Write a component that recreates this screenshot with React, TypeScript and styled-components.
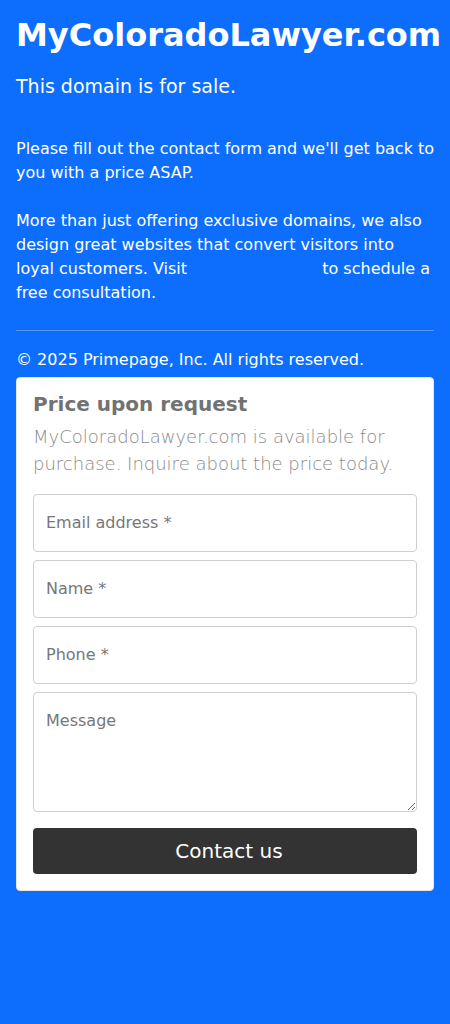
import React from "react";
import styled, { createGlobalStyle } from "styled-components";

const Global = createGlobalStyle`
  html, body {
    margin: 0;
    padding: 0;
    background: #0d6efd;
  }
  body {
    font-family: "DejaVu Sans", Verdana, sans-serif;
    color: #fff;
  }
  * { box-sizing: border-box; }
`;

const Page = styled.main`
  min-height: 1024px;
  background: #0d6efd;
  padding: 16px;
`;

const Title = styled.h1`
  margin: 0 0 18px;
  font-size: 32px;
  line-height: 1.2;
  font-weight: 700;
  color: #fff;
  white-space: nowrap;
`;

const Lead = styled.p`
  margin: 0 0 36px;
  font-size: 19px;
  line-height: 28.5px;
  font-weight: 400;
`;

const Text = styled.p`
  margin: 0 -2px 24px 0;
  font-size: 16px;
  line-height: 24px;
`;

const HiddenLink = styled.a`
  color: #0d6efd;
  text-decoration: none;
`;

const Rule = styled.hr`
  margin: 25px 0 17px;
  border: 0;
  border-top: 1px solid rgba(255, 255, 255, 0.3);
`;

const Copyright = styled.p`
  margin: 0 0 5px;
  font-size: 16px;
  line-height: 24px;
`;

const Card = styled.section`
  background: #fff;
  border: 1px solid #e6e6e6;
  border-radius: 4px;
  padding: 16px;
`;

const CardTitle = styled.h2`
  margin: 0 0 9px;
  font-size: 20px;
  line-height: 20px;
  font-weight: 700;
  color: #727272;
`;

const CardText = styled.p`
  margin: 0 0 17px;
  font-size: 18px;
  line-height: 27px;
  font-weight: 200;
  color: #8a8a8a;
`;

const Form = styled.form`
  display: flex;
  flex-direction: column;
  gap: 8px;
`;

const Field = styled.input`
  display: block;
  width: 100%;
  height: 58px;
  padding: 0 12px;
  border: 1px solid #cfcfcf;
  border-radius: 4px;
  font-family: "DejaVu Sans", Verdana, sans-serif;
  font-size: 16px;
  color: #333;
  background: #fff;
  &::placeholder { color: #777; }
`;

const Area = styled.textarea`
  display: block;
  width: 100%;
  height: 120px;
  padding: 18px 12px;
  border: 1px solid #cfcfcf;
  border-radius: 4px;
  font-family: "DejaVu Sans", Verdana, sans-serif;
  font-size: 16px;
  line-height: 19px;
  color: #333;
  background: #fff;
  resize: vertical;
  &::placeholder { color: #777; }
`;

const Submit = styled.button`
  margin-top: 8px;
  height: 46px;
  width: 100%;
  padding: 0 0 0 8px;
  border: 0;
  border-radius: 4px;
  background: #333;
  color: #fff;
  font-family: "DejaVu Sans", Verdana, sans-serif;
  font-size: 20px;
  cursor: pointer;
`;

export default function App() {
  return (
    <>
      <Global />
      <Page>
        <Title>MyColoradoLawyer.com</Title>
        <Lead>This domain is for sale.</Lead>
        <Text>Please fill out the contact form and we'll get back to you with a price ASAP.</Text>
        <Text>
          More than just offering exclusive domains, we also design great websites that convert visitors into loyal
          customers. Visit <HiddenLink href="#">Primepage.com</HiddenLink> to schedule a free consultation.
        </Text>
        <Rule />
        <Copyright>© 2025 Primepage, Inc. All rights reserved.</Copyright>
        <Card>
          <CardTitle>Price upon request</CardTitle>
          <CardText>MyColoradoLawyer.com is available for purchase. Inquire about the price today.</CardText>
          <Form onSubmit={(e) => e.preventDefault()}>
            <Field type="email" placeholder="Email address *" />
            <Field type="text" placeholder="Name *" />
            <Field type="tel" placeholder="Phone *" />
            <Area placeholder="Message" />
            <Submit type="submit">Contact us</Submit>
          </Form>
        </Card>
      </Page>
    </>
  );
}
